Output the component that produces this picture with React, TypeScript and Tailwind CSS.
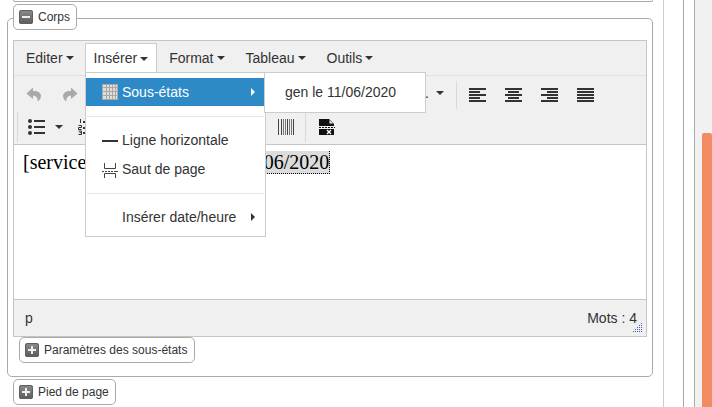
import React from "react";

function Caret({ className = "" }: { className?: string }) {
  return <span className={"inline-block w-0 h-0 border-x-[4px] border-x-transparent border-t-[4px] border-t-[#333] " + className} />;
}

function MenuItem({ label, active = false, cls = "" }: { label: string; active?: boolean; cls?: string }) {
  return (
    <div className={"flex items-center h-[30px] px-[8px] border " + (active ? "bg-white border-[#ccc] border-b-0" : "border-transparent") + " " + cls}>
      <span>{label}</span>
      <Caret className="ml-[3px]" />
    </div>
  );
}

function BoxIcon({ plus = false }: { plus?: boolean }) {
  const id = plus ? "boxPlus" : "boxMinus";
  return (
    <svg width="14" height="14" viewBox="0 0 14 14" className="shrink-0">
      <defs>
        <linearGradient id={id} x1="0" y1="0" x2="0" y2="1">
          <stop offset="0" stopColor="#8c8c8c" />
          <stop offset="1" stopColor="#5a5a5a" />
        </linearGradient>
      </defs>
      <rect x="0" y="0" width="14" height="14" rx="2" fill={"url(#" + id + ")"} />
      <rect x="0.5" y="0.5" width="13" height="13" rx="2" fill="none" stroke="#5f5f5f" />
      <rect x="3" y="6" width="8" height="2" fill="#eee" />
      {plus && <rect x="6" y="3" width="2" height="8" fill="#eee" />}
    </svg>
  );
}

function LegendButton({ label, plus = false, cls = "" }: { label: string; plus?: boolean; cls?: string }) {
  return (
    <div className={"flex items-center h-[26px] pl-[5px] pr-[5px] bg-white border border-[#aaa] rounded-[5px] text-[12px] text-[#333] " + cls}>
      <BoxIcon plus={plus} />
      <span className="ml-[5px]">{label}</span>
    </div>
  );
}

function Align({ rows, cls = "" }: { rows: [number, number][]; cls?: string }) {
  return (
    <svg width="17" height="14" viewBox="0 0 17 14" className={"shrink-0 mt-[4px] " + cls}>
      {rows.map(([x, w], i) => (
        <rect key={i} x={x} y={i * 3} width={w} height="2" fill="#333" />
      ))}
    </svg>
  );
}

function Undo({ flip = false }: { flip?: boolean }) {
  return (
    <svg width="16" height="15" viewBox="0 0 16 15" className={"mt-[3px] " + (flip ? "-scale-x-100" : "")}>
      <path d="M7 0.5 L0.5 6.5 L7 12 V8.5 C10 8.5 11.5 10.5 12 14.5 C15 12 15.5 9 14.5 7 C13 4.5 10.5 4 7 4 Z" fill="#a9a9a9" />
    </svg>
  );
}

export default function App() {
  return (
    <div className="relative flex w-[712px] h-[407px] overflow-hidden bg-white font-['Liberation_Sans',Arial,sans-serif] text-[#333]">
      <div className="w-[663px] shrink-0">
        <div className="ml-[13px] w-[640px] h-[2px] border-b border-r border-l border-[#aaa] rounded-b-[3px]" />
        <div className="ml-[7px] mt-[16px] w-[646px] border border-[#aaa] rounded-[5px] pb-[13px]">
          <LegendButton label="Corps" cls="ml-[5px] -mt-[15px] w-[64px]" />
          <div className="ml-[5px] mt-[10px] w-[634px] border border-[#c5c5c5] bg-[#f0f0f0] text-[14px]">
            <div className="flex items-end h-[35px] pb-[2px] pl-[3px] gap-[2px] border-b border-[#e0e0e0]">
              <MenuItem label="Editer" />
              <MenuItem label="Insérer" active />
              <MenuItem label="Format" cls="ml-[1px]" />
              <MenuItem label="Tableau" cls="ml-[1px]" />
              <MenuItem label="Outils" cls="ml-[1px]" />
            </div>
            <div className="flex items-center h-[34px] pl-[12px]">
              <Undo />
              <span className="ml-[20px] flex"><Undo flip /></span>
              <span className="ml-[347px] w-[11px] text-[14px] leading-none">.</span>
              <Caret />
              <span className="ml-[12px] mt-[4px] w-px h-[28px] bg-[#d9d9d9]" />
              <Align cls="ml-[12px]" rows={[[0, 17], [0, 11], [0, 17], [0, 11], [0, 17]]} />
              <Align cls="ml-[19px]" rows={[[0, 17], [3, 11], [0, 17], [3, 11], [0, 17]]} />
              <Align cls="ml-[19px]" rows={[[0, 17], [6, 11], [0, 17], [6, 11], [0, 17]]} />
              <Align cls="ml-[19px]" rows={[[0, 17], [0, 17], [0, 17], [0, 17], [0, 17]]} />
            </div>
            <div className="flex items-center h-[34px] border-b border-[#c5c5c5] box-content">
              <span className="ml-[3px] w-px h-[30px] bg-[#d9d9d9]" />
              <svg width="18" height="16" viewBox="0 0 18 16" className="ml-[10px]">
                <circle cx="2" cy="2" r="2" fill="#333" />
                <circle cx="2" cy="8" r="2" fill="#333" />
                <circle cx="2" cy="14" r="2" fill="#333" />
                <rect x="6" y="1" width="11" height="2" fill="#333" />
                <rect x="6" y="7" width="11" height="2" fill="#333" />
                <rect x="6" y="13" width="11" height="2" fill="#333" />
              </svg>
              <Caret className="ml-[9px]" />
              <svg width="12" height="16" viewBox="0 0 12 16" className="ml-[15px]">
                <path d="M2.5 0 V4 M0.5 6.5 H3.5 V8.5 H0.5 V10.5 H3.5 M0.5 12 H3.5 V15.5 H0.5 M1.5 13.7 H3.5" fill="none" stroke="#333" />
                <rect x="5" y="2" width="2" height="2" fill="#333" />
                <rect x="5" y="8" width="2" height="2" fill="#333" />
                <rect x="5" y="13" width="2" height="2" fill="#333" />
              </svg>
              <svg width="16" height="16" viewBox="0 0 16 16" className="ml-[188px]">
                {[0, 3, 5, 7, 9, 11, 13, 15].map((x) => (
                  <rect key={x} x={x} y="0" width="1" height="16" fill={x % 3 === 0 ? "#444" : "#777"} />
                ))}
              </svg>
              <span className="ml-[11px] w-px h-[30px] bg-[#d9d9d9]" />
              <svg width="16" height="16" viewBox="0 0 16 16" className="ml-[13px]">
                <path d="M0 0 H10 L15 5 V7 H0 Z" fill="#111" />
                <path d="M10.5 1 L14 4.5 H10.5 Z" fill="#f0f0f0" />
                {[0, 3, 6, 9, 12, 15].map((x) => (
                  <rect key={x} x={x} y="8" width="2" height="1" fill="#111" />
                ))}
                <rect x="0" y="10" width="15" height="6" fill="#111" />
                <path d="M8 11 L12 15 M12 11 L8 15" stroke="#fff" strokeWidth="1.4" />
              </svg>
            </div>
            <div className="h-[154px] bg-white pl-[9px] pt-[6px] font-['Liberation_Serif',serif] text-[20px] leading-[23px] text-black whitespace-nowrap">
              <span className="inline-block w-[162.5px]">[service</span>
              <span className="bg-[#dcdcdc] border-b border-r border-dotted border-black">gen le 11/06/2020</span>
            </div>
            <div className="relative flex items-center justify-between h-[37px] border-t border-[#c5c5c5] pl-[11px] pr-[9px]">
              <span>p</span>
              <span>Mots : 4</span>
              <svg width="10" height="10" viewBox="0 0 10 10" className="absolute right-[3px] bottom-[3px]">
                {[[8, 0], [6, 2], [8, 2], [4, 4], [6, 4], [8, 4], [2, 6], [4, 6], [6, 6], [8, 6], [0, 8], [2, 8], [4, 8], [6, 8], [8, 8]].map(([x, y], i) => (
                  <rect key={i} x={x} y={y} width="1" height="1" fill="#3f5fb0" />
                ))}
              </svg>
            </div>
          </div>
          <LegendButton label="Paramètres des sous-états" plus cls="ml-[11px] w-[176px]" />
        </div>
        <LegendButton label="Pied de page" plus cls="ml-[13px] mt-[2px] w-[103px]" />
      </div>
      <div className="w-[21px] shrink-0 border-l border-r border-l-[#ccc] border-r-[#aaa]" />
      <div className="w-[11px] shrink-0 border-r border-[#aaa]" />
      <div className="w-[17px] shrink-0 bg-[#f1f1f1] pl-[7px] pt-[133px]">
        <div className="h-full bg-[#f38b60] rounded-t-[2px]" />
      </div>

      {/* dropdown menu */}
      <div className="absolute left-[85px] top-[72px] w-[181px] bg-white border border-[#ccc] text-[14px] pt-[5px] pb-[5px]">
        <div className="flex items-center h-[28px] bg-[#2d8ac7] text-white pl-[16px] pr-[10px]">
          <svg width="16" height="16" viewBox="0 0 16 16" className="shrink-0">
            <rect x="0" y="0" width="16" height="16" fill="#ddd" />
            <rect x="0.5" y="0.5" width="15" height="15" fill="none" stroke="#a9a9a9" />
            <rect x="0" y="3" width="16" height="1" fill="#a9a9a9" />
            <rect x="0" y="7" width="16" height="1" fill="#a9a9a9" />
            <rect x="0" y="11" width="16" height="1" fill="#a9a9a9" />
            <rect x="4" y="0" width="1" height="16" fill="#a9a9a9" />
            <rect x="7" y="0" width="1" height="16" fill="#a9a9a9" />
            <rect x="10" y="0" width="1" height="16" fill="#a9a9a9" />
            <rect x="13" y="0" width="1" height="16" fill="#a9a9a9" />
          </svg>
          <span className="ml-[4px] flex-1">Sous-états</span>
          <span className="w-0 h-0 border-y-[4px] border-y-transparent border-l-[4px] border-l-white" />
        </div>
        <div className="mt-[10px] mb-[9px] h-px bg-[#e5e5e5] mx-px" />
        <div className="flex items-center h-[29px] pl-[16px]">
          <span className="block w-[16px] h-[2px] bg-[#333]" />
          <span className="ml-[4px]">Ligne horizontale</span>
        </div>
        <div className="flex items-center h-[29px] pl-[16px]">
          <svg width="16" height="16" viewBox="0 0 16 16" className="shrink-0">
            <path d="M2.5 1 V6.5 H13.5 V1 M2.5 16 V11.5 H13.5 V16" fill="none" stroke="#444" />
            {[0, 3, 6, 9, 12, 14].map((x) => (
              <rect key={x} x={x} y="9" width="2" height="1" fill="#444" />
            ))}
          </svg>
          <span className="ml-[4px]">Saut de page</span>
        </div>
        <div className="mt-[9px] mb-[9px] h-px bg-[#e5e5e5] mx-px" />
        <div className="flex items-center h-[28px] pl-[36px] pr-[10px]">
          <span className="flex-1">Insérer date/heure</span>
          <span className="w-0 h-0 border-y-[4px] border-y-transparent border-l-[4px] border-l-[#333]" />
        </div>
      </div>

      {/* sub menu */}
      <div className="absolute left-[264px] top-[72px] w-[162px] h-[41px] flex items-center bg-white border border-[#ccc] text-[14px] pl-[20px]">
        gen le 11/06/2020
      </div>
    </div>
  );
}
